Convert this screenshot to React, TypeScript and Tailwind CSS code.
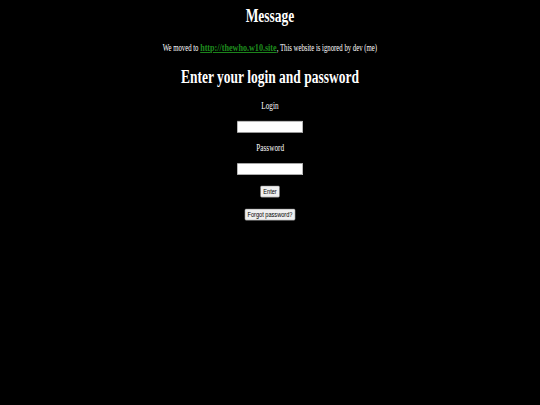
export default function App() {
  return (
    <div className="w-[540px] h-[405px] overflow-hidden bg-black">
      {/* page laid out at 1280x720, then squeezed into the 540x405 frame */}
      <div className="w-[1280px] h-[720px] origin-top-left scale-x-[0.421875] scale-y-[0.5625] bg-black text-white font-['Liberation_Serif',serif] flex flex-col items-center">
        <h1 className="mt-[10px] text-[32px] leading-[37px] font-bold">Message</h1>
        <p className="mt-[24px] text-[20px] leading-[24px] whitespace-nowrap scale-x-[0.8]">
          We moved to{" "}
          <a
            href="#"
            className="inline-block font-bold underline text-[#1e8c1e] text-[24px] leading-[24px] scale-y-[0.833] origin-[50%_80%]"
          >
            http://thewho.w10.site
          </a>
          , This website is ignored by dev (me)
        </p>
        <h1 className="mt-[22px] text-[32px] leading-[37px] font-bold">Enter your login and password</h1>
        <label className="mt-[21px] text-[19px] leading-[22px] scale-x-[0.9]">Login</label>
        <input
          type="text"
          className="mt-[17px] w-[156px] h-[21px] bg-white border border-[#767676] text-black"
        />
        <label className="mt-[16px] text-[19px] leading-[22px] scale-x-[0.9]">Password</label>
        <input
          type="password"
          className="mt-[16px] w-[156px] h-[21px] bg-white border border-[#767676] text-black"
        />
        <button className="mt-[19px] h-[21px] px-[6px] bg-[#efefef] border border-[#767676] rounded-[3px] text-black text-[13.33px] leading-[17px] font-['Liberation_Sans',sans-serif]">
          Enter
        </button>
        <button className="mt-[20px] h-[21px] px-[6px] bg-[#efefef] border border-[#767676] rounded-[3px] text-black text-[13.33px] leading-[17px] font-['Liberation_Sans',sans-serif]">
          Forgot password?
        </button>
      </div>
    </div>
  );
}
